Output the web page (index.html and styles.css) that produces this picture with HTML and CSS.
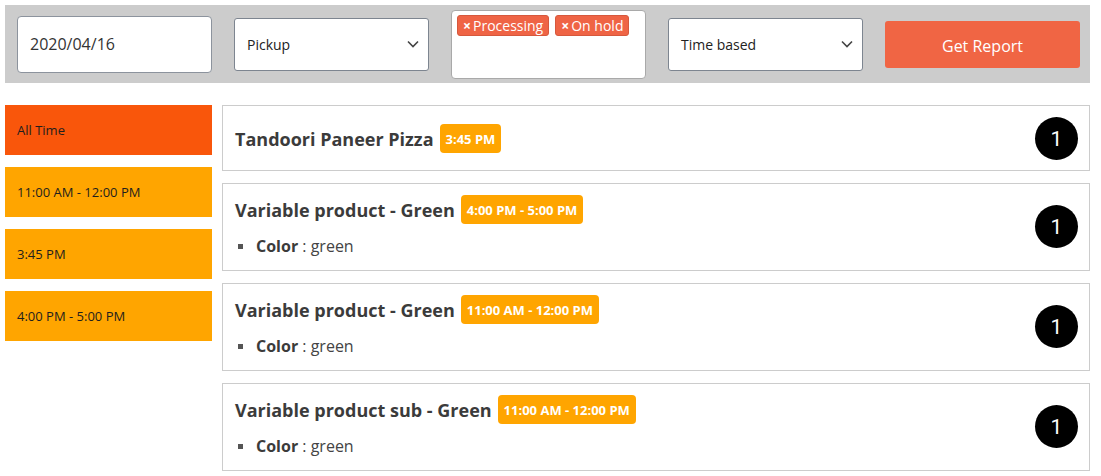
FILE: index.html
```html
<!DOCTYPE html>
<html lang="en">
<head>
<meta charset="utf-8">
<title>Report</title>
<link rel="stylesheet" href="styles.css">
</head>
<body>
<div class="toolbar">
  <div class="field date-input">2020/04/16</div>
  <div class="field select"><span>Pickup</span>
    <svg class="chev" width="12" height="8" viewBox="0 0 12 8"><polyline points="1,1.5 6,6.5 11,1.5" fill="none" stroke="#444" stroke-width="1.6"/></svg>
  </div>
  <div class="field multi">
    <span class="tag"><span class="x">×</span>Processing</span>
    <span class="tag"><span class="x">×</span>On hold</span>
  </div>
  <div class="field select"><span>Time based</span>
    <svg class="chev" width="12" height="8" viewBox="0 0 12 8"><polyline points="1,1.5 6,6.5 11,1.5" fill="none" stroke="#444" stroke-width="1.6"/></svg>
  </div>
  <button class="btn">Get Report</button>
</div>

<div class="main">
  <div class="sidebar">
    <div class="slot active">All Time</div>
    <div class="slot">11:00 AM - 12:00 PM</div>
    <div class="slot">3:45 PM</div>
    <div class="slot">4:00 PM - 5:00 PM</div>
  </div>
  <div class="orders">
    <div class="card single">
      <div class="info">
        <div class="title">Tandoori Paneer Pizza <span class="badge">3:45 PM</span></div>
      </div>
      <div class="count">1</div>
    </div>
    <div class="card">
      <div class="info">
        <div class="title">Variable product - Green <span class="badge">4:00 PM - 5:00 PM</span></div>
        <ul class="attrs"><li><b>Color</b>&nbsp;: green</li></ul>
      </div>
      <div class="count">1</div>
    </div>
    <div class="card">
      <div class="info">
        <div class="title">Variable product - Green <span class="badge">11:00 AM - 12:00 PM</span></div>
        <ul class="attrs"><li><b>Color</b>&nbsp;: green</li></ul>
      </div>
      <div class="count">1</div>
    </div>
    <div class="card">
      <div class="info">
        <div class="title">Variable product sub - Green <span class="badge">11:00 AM - 12:00 PM</span></div>
        <ul class="attrs"><li><b>Color</b>&nbsp;: green</li></ul>
      </div>
      <div class="count">1</div>
    </div>
  </div>
</div>
</body>
</html>
```

FILE: styles.css
```css
* { box-sizing: border-box; }
body {
  margin: 0;
  padding: 5px 11px 5px 5px;
  font-family: "Open Sans", "Noto Sans", sans-serif;
  background: #fff;
  color: #333;
}
.toolbar {
  background: #cccccc;
  height: 78px;
  display: grid;
  grid-template-columns: repeat(5, 195px);
  column-gap: 22px;
  padding: 0 10px 0 12px;
  align-items: center;
}
.field {
  background: #fff;
  display: flex;
  align-items: center;
}
.date-input {
  height: 57px;
  border: 1px solid #8c939d;
  border-radius: 4px;
  padding-left: 12px;
  font-size: 16px;
  color: #333;
}
.select {
  height: 53px;
  border: 1px solid #7d8590;
  border-radius: 3px;
  padding: 0 9px 0 12px;
  font-size: 14px;
  color: #222;
  justify-content: space-between;
}
.chev { display: block; }
.multi {
  height: 69px;
  border: 1px solid #a9a9a9;
  border-radius: 4px;
  align-items: flex-start;
  padding: 4px 5px;
  gap: 6px;
}
.tag {
  background: #ef6445;
  border: 1px solid #d6583d;
  border-radius: 3px;
  color: #fff;
  font-size: 14px;
  height: 21px;
  line-height: 19px;
  padding: 0 5px 0 5px;
  display: flex;
  align-items: center;
}
.tag .x {
  font-weight: 700;
  font-size: 14px;
  margin-right: 2px;
}
.btn {
  height: 47px;
  border: none;
  border-radius: 3px;
  background: #f06544;
  color: #fff;
  font-family: "Open Sans", "Noto Sans", sans-serif;
  font-size: 16px;
  padding: 3px 0 0;
}
.main {
  display: flex;
  gap: 10px;
  margin-top: 22px;
}
.sidebar {
  width: 207px;
  flex: none;
  display: flex;
  flex-direction: column;
  gap: 12px;
}
.slot {
  height: 50px;
  background: #ffa500;
  padding-left: 12px;
  display: flex;
  align-items: center;
  font-size: 13px;
  color: #1e1e1e;
}
.slot.active { background: #f9560b; }
.orders {
  flex: 1;
  display: flex;
  flex-direction: column;
  gap: 12px;
}
.card {
  border: 1px solid #cccccc;
  padding: 11px 11px 12px 12px;
  display: flex;
  align-items: center;
  justify-content: space-between;
}
.card.single { padding: 11px 11px 10px 12px; }
.title {
  display: flex;
  align-items: center;
  gap: 6px;
  height: 29px;
  font-size: 18px;
  font-weight: 700;
  color: #3b3b3b;
}
.badge {
  background: #ffa500;
  color: #fff;
  font-size: 13px;
  font-weight: 700;
  height: 29px;
  padding: 0 6px;
  border-radius: 4px;
  display: flex;
  align-items: center;
}
.attrs {
  list-style: none;
  margin: 10px 0 0;
  padding: 0;
}
.attrs li {
  display: flex;
  align-items: center;
  line-height: 24px;
  font-size: 16px;
  color: #444;
}
.attrs li::before {
  content: "";
  width: 5px;
  height: 5px;
  background: #555;
  margin: 0 13px 0 3px;
}
.attrs b { font-weight: 700; color: #3b3b3b; }
.count {
  width: 43px;
  height: 43px;
  border-radius: 50%;
  background: #000;
  color: #fff;
  font-family: Roboto, "Liberation Sans", sans-serif;
  font-size: 21px;
  display: flex;
  align-items: center;
  justify-content: center;
  flex: none;
}
```
